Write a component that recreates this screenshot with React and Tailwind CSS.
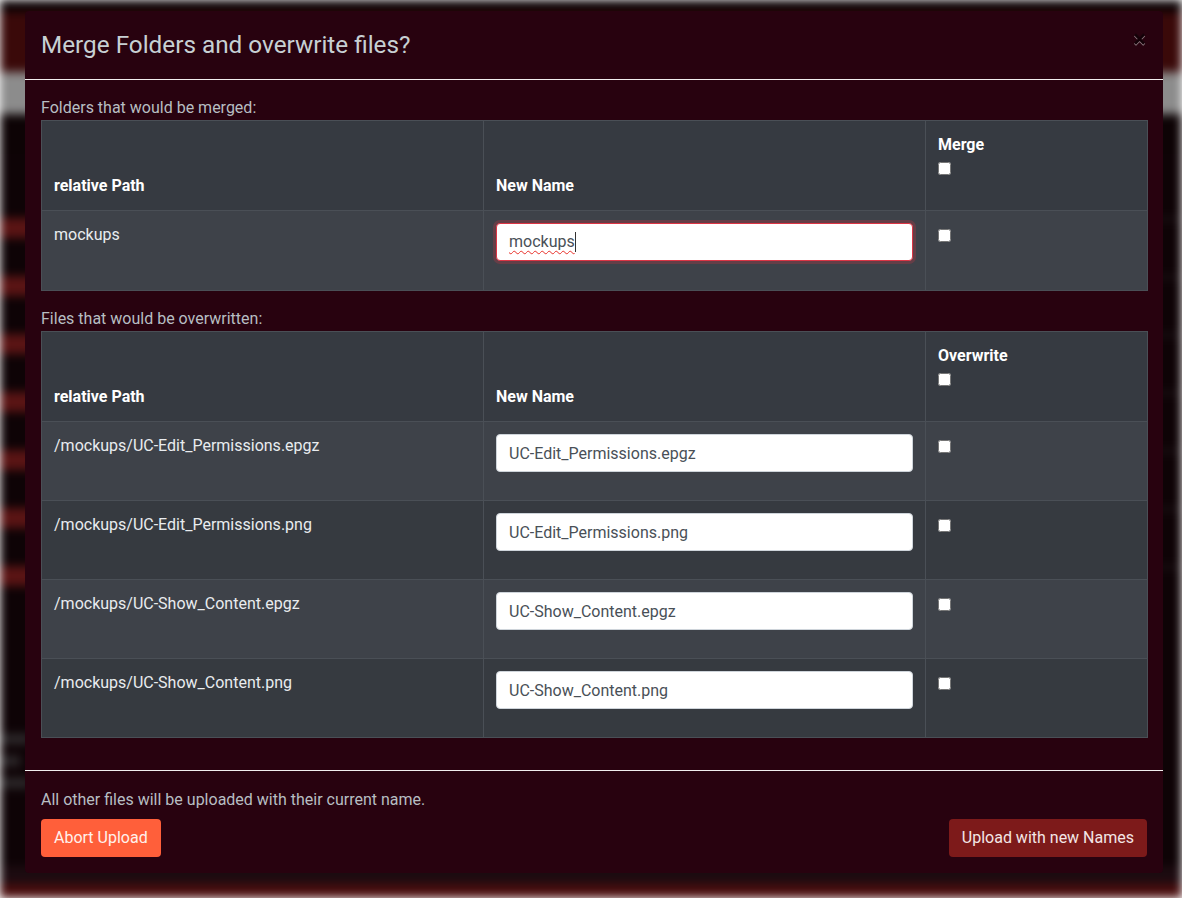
import React from 'react';

const folders = [{ path: 'mockups', name: 'mockups' }];

const files = [
  { path: '/mockups/UC-Edit_Permissions.epgz', name: 'UC-Edit_Permissions.epgz' },
  { path: '/mockups/UC-Edit_Permissions.png', name: 'UC-Edit_Permissions.png' },
  { path: '/mockups/UC-Show_Content.epgz', name: 'UC-Show_Content.epgz' },
  { path: '/mockups/UC-Show_Content.png', name: 'UC-Show_Content.png' },
];

function Checkbox() {
  return <input type="checkbox" className="w-[13px] h-[13px] m-0 align-middle" />;
}

function NameInput({ value, invalid }) {
  if (invalid) {
    // focused field with the spell-check squiggle and caret
    return (
      <div className="h-[38px] w-full bg-white rounded-[4px] border border-[#dc3545] shadow-[0_0_0_3px_rgba(220,53,69,0.25)] px-3 flex items-center text-[16px] text-[#495057]">
        <span className="underline decoration-wavy decoration-[#e8302a] decoration-1 underline-offset-[3px]">{value}</span>
        <span className="w-px h-[20px] bg-[#333]" />
      </div>
    );
  }
  return (
    <input
      type="text"
      defaultValue={value}
      className="h-[38px] w-full bg-white rounded-[4px] border border-[#ced4da] px-3 text-[16px] text-[#495057] outline-none"
    />
  );
}

function MergeTable({ rows, action, rowHeight, firstInvalid }) {
  return (
    <table className="w-[1106px] table-fixed border-collapse text-[16px] text-[#e9ecef]">
      <colgroup>
        <col className="w-[442px]" />
        <col className="w-[442px]" />
        <col className="w-[222px]" />
      </colgroup>
      <thead>
        <tr className="h-[90px] bg-[#363a41]">
          <th className="border border-[#4a4f56] px-3 pb-3 align-bottom text-left font-bold leading-6 text-white">relative Path</th>
          <th className="border border-[#4a4f56] px-3 pb-3 align-bottom text-left font-bold leading-6 text-white">New Name</th>
          <th className="border border-[#4a4f56] px-3 pt-3 align-top text-left font-bold leading-6 text-white">
            <div>{action}</div>
            <div className="leading-6 -mt-[1px]"><Checkbox /></div>
          </th>
        </tr>
      </thead>
      <tbody>
        {rows.map((r, i) => (
          <tr key={r.path} className={`${rowHeight} ${i % 2 === 0 ? 'bg-[#3e4249]' : 'bg-[#363a40]'}`}>
            <td className="border border-[#4a4f56] px-3 pt-3 align-top leading-6">{r.path}</td>
            <td className="border border-[#4a4f56] px-3 pt-3 align-top">
              <NameInput value={r.name} invalid={firstInvalid && i === 0} />
            </td>
            <td className="border border-[#4a4f56] px-3 pt-3 align-top leading-6">
              <Checkbox />
            </td>
          </tr>
        ))}
      </tbody>
    </table>
  );
}

function BlurredPage() {
  const spots = [233, 291, 349, 408, 466, 524, 581];
  return (
    <div className="h-[898px] w-[1182px] bg-[#0e0306] blur-[5px] flex flex-col">
      <div className="h-[12px] bg-[#0a0204]" />
      <div className="h-[60px] bg-[#3a0909]" />
      <div className="h-[42px] bg-[#8c8c8c]" />
      <div className="h-[40px] bg-[#0d0305]" />
      <div className="flex-1 flex flex-col gap-[38px] pt-[64px]">
        {spots.map((s) => (
          <div key={s} className="flex justify-between">
            <div className="w-[40px] h-[20px] bg-[#5a1414]" />
            <div className="w-[40px] h-[2px] bg-[#2a2024]" />
          </div>
        ))}
        <div className="flex flex-col gap-[12px] pt-[110px]">
          <div className="w-[30px] h-[10px] bg-[#2e2a2c]" />
          <div className="w-[20px] h-[10px] bg-[#2e2a2c]" />
          <div className="w-[30px] h-[10px] bg-[#2e2a2c]" />
        </div>
      </div>
      <div className="h-[18px] bg-[#1c0b10]" />
      <div className="h-[14px] bg-[#4a0e0e]" />
    </div>
  );
}

export default function App() {
  return (
    <div className="relative w-[1182px] h-[898px] overflow-hidden font-['Roboto','Liberation_Sans',sans-serif]">
      <BlurredPage />

      {/* Modal */}
      <div className="absolute left-[25px] top-[11px] w-[1138px] bg-[#28020f] rounded-[4px] flex flex-col">
        {/* Header */}
        <div className="flex items-start justify-between px-4 pt-[19px] pb-[19px] border-b border-[#f1eeee]">
          <h5 className="text-[24.3px] leading-[30px] font-normal text-[#c7d0d3]">Merge Folders and overwrite files?</h5>
          <button className="text-[24px] leading-[24px] font-bold text-black opacity-50 [text-shadow:0_1px_0_#fff] -mt-[3px] mr-[1px]">×</button>
        </div>

        {/* Body */}
        <div className="px-4 pt-4 pb-4">
          <p className="text-[16px] leading-6 text-[#b7bec2]">Folders that would be merged:</p>
          <div className="mb-4">
            <MergeTable rows={folders} action="Merge" rowHeight="h-[80px]" firstInvalid />
          </div>
          <p className="text-[16px] leading-6 text-[#b7bec2]">Files that would be overwritten:</p>
          <div className="mb-4">
            <MergeTable rows={files} action="Overwrite" rowHeight="h-[79px]" />
          </div>
        </div>

        {/* Footer */}
        <div className="border-t border-[#f1eeee] px-4 pt-[17px] pb-4">
          <p className="text-[16px] leading-6 text-[#b7bec2]">All other files will be uploaded with their current name.</p>
          <div className="mt-[7px] flex items-center justify-between">
            <button className="h-[38px] px-[13px] rounded-[4px] bg-[#ff5f3a] text-[16px] text-[#fff1ec]">Abort Upload</button>
            <button className="h-[38px] px-[13px] rounded-[4px] bg-[#7d1a1a] text-[16px] text-[#f3e6e6]">Upload with new Names</button>
          </div>
        </div>
      </div>
    </div>
  );
}
